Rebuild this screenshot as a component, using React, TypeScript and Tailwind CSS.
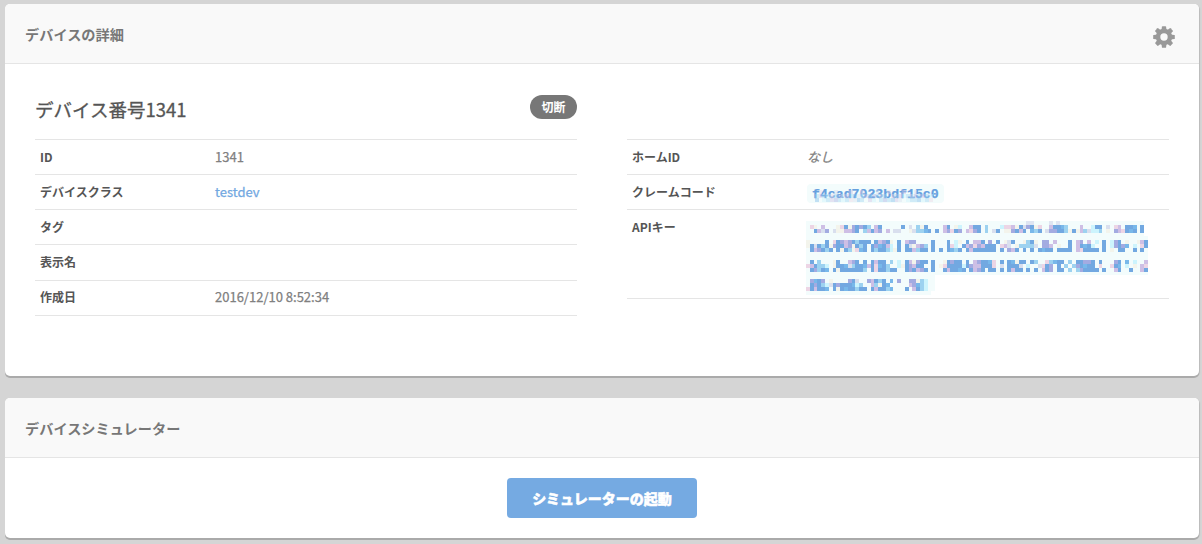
import type { ReactNode } from 'react';

const PALETTE: Record<string, string> = {
  B: '#72a8e1',
  S: '#78b8ea',
  L: '#9dd2f0',
  V: '#a3abe1',
  P: '#cebfe5',
  K: '#ecd5e5',
  G: '#d9dfee',
  C: '#cdf4fd',
  Y: '#f3f4ec',
};

const CELL = 3.8;

// Each line of the masked key: top offset and its cell rows
const API_KEY_LINES = [
  {
    top: 4,
    rows: [
      '.KY.P...YKBYVBVBL.PB.....B.G.LYB....PB.YC..PBB.L...CKKPYBGVBYK..PBBSL...P..CBB.G.KP.BBS.B.',
      '..BPGV.GYYPPVB.LPBPV.P.GG..YGLLSB.B.PVKBV.PKVB.L.GB.YYVBPB.SLB.GVVBBLYBYPLGCCL.Y.VPKBSB.B.',
    ],
  },
  {
    top: 19,
    rows: [
      'Y....B.KBVPVBLBBB.BPVBY.B.PVV....B...B.CY.B.PPB.V.B.YGB..YLBY.VV.P...B.PV.P.C.B.CVB.Y..YPB',
      'YBGBLBYVBBPVYBLB.BVSBPC.B.BGYPVL.B...BKC.BPVKVPBBB.KPG.YLLLLG.VVP.Y..B.PBSBC..B.CVBVS.C.KB',
      '.BPVBLB.BYBLYKSB.BLBBLCYB.BBPLBB.B.B.BSLB.BPBBBBBB.B.VPB.B.B.BSBB.BBBB.PKBBBB.B.Y.BB..B.B.',
    ],
  },
  {
    top: 39,
    rows: [
      '.B.L...YB..PVB.B.BPBB.L.C.BPYVBB.B..YBVBB.B.PVBBSK.B.BSYBB.BL..KLSBB.L.BBVVB.B...VB.S.C..P',
      'KPBLLC.YBBSGLBBSPBKSBL..CYBVPBB..B.YKBBBBCBVPPBBBK.G.BBBG.C..GKBV.B.L.LVBSBB.K..KBS.C.Y.PK',
      '.BVLBS.BYBBBBBBL.BKBBLBB..BVBPVB.B..BPBBSB.BPVB.BB.B.BPBB.B.B.PBV.BB.L.LVBBBB.B..PB..B..PB',
    ],
  },
  {
    top: 58,
    rows: [
      '.VSBV.Y....VBG..VPBLB.S.V..VVYLC',
      '.BVBLCGBVBBBSCL..PLYBS.....PVSLC',
      'KBPBBS.BYBSBBLBB.BPBBLS...B.PBLC',
    ],
  },
];

const CLAIM_ROWS = [
  '..K...G...P..K...G..K...P..G.....',
  '.LPLCKLVGPLSGCPLVLGL.KLPCLGVLPLC.',
  '.S.CLPVLCLKGSL.PC.LVLSPG.CLLSCLK.',
];

function Cells({ rows, top, left = 0 }: { rows: string[]; top: number; left?: number }) {
  return (
    <>
      {rows.map((row, y) =>
        row.split('').map((c, i) => {
          if (c === '.') return null;
          const x0 = Math.round(i * CELL);
          const x1 = Math.round((i + 1) * CELL);
          return (
            <rect key={`${y}-${i}`} x={left + x0} y={top + y * 4} width={x1 - x0} height={4} fill={PALETTE[c]} />
          );
        })
      )}
    </>
  );
}

function MaskedApiKey() {
  return (
    <svg width="342" height="74" className="block" shapeRendering="crispEdges">
      <path d="M0 0H338V15H342V54H129V70H125V74H0Z" fill="#f3fcfc" />
      <path d="M220 0h8v4h-8zM243 0h4v4h-4zM250 0h4v4h-4z" fill="#dfe5f2" />
      {API_KEY_LINES.map((line) => (
        <Cells key={line.top} rows={line.rows} top={line.top} />
      ))}
    </svg>
  );
}

function MaskedClaimCode() {
  return (
    <div className="relative h-[19px] w-[137px] rounded-sm bg-[#f3fcfc]">
      <span className="absolute top-[1px] left-[5px] font-['Liberation_Mono',monospace] text-[13.2px] leading-[20px] font-bold text-[#66a0df]">
        f4cad7023bdf15c0
      </span>
      <svg width="137" height="19" className="absolute inset-0 opacity-40" shapeRendering="crispEdges">
        <Cells rows={CLAIM_ROWS} top={6} left={4} />
      </svg>
    </div>
  );
}

function GearIcon() {
  return (
    <svg width="22" height="22" viewBox="-11 -11 22 22" fill="#999">
      <path
        fillRule="evenodd"
        d="M-8.2 0a8.2 8.2 0 1 0 16.4 0a8.2 8.2 0 1 0 -16.4 0ZM-3.7 0a3.7 3.7 0 1 1 7.4 0a3.7 3.7 0 1 1 -7.4 0Z"
      />
      {[0, 45, 90, 135, 180, 225, 270, 315].map((deg) => (
        <path key={deg} d="M-2.6 -6.5L-2.1 -10.3Q-2 -10.8 -1.5 -10.8H1.5Q2 -10.8 2.1 -10.3L2.6 -6.5Z" transform={`rotate(${deg})`} />
      ))}
    </svg>
  );
}

function Card({ title, action, className, children }: {
  title: string;
  action?: ReactNode;
  className: string;
  children: ReactNode;
}) {
  return (
    <section className={`rounded-[5px] bg-white shadow-[0_2px_0_#aaa,1px_1px_1px_#bbb] ${className}`}>
      <header className="flex h-[60px] items-center justify-between rounded-t-[5px] border-b border-[#e5e5e5] bg-[#f9f9f9] pr-6 pl-5">
        <h2 className="pt-[2px] text-[14.2px] font-bold text-[#777]">{title}</h2>
        {action}
      </header>
      {children}
    </section>
  );
}

function Row({ label, height = 'h-[35px]', leading = 'leading-[34px]', labelWidth, children }: {
  label: string;
  height?: string;
  leading?: string;
  labelWidth: string;
  children?: ReactNode;
}) {
  return (
    <div className={`flex border-b border-[#e5e5e5] pl-[5px] ${height} ${leading}`}>
      <dt className={`shrink-0 text-[12px] font-bold text-[#555] ${labelWidth}`}>{label}</dt>
      <dd className="text-[13px] text-[#808080] [-webkit-text-stroke:0.25px]">{children}</dd>
    </div>
  );
}

export default function App() {
  return (
    <div className="h-[544px] overflow-hidden bg-[#d5d5d5] pt-1 pr-[3px] pl-[5px] font-['Noto_Sans_CJK_JP',sans-serif]">
      <Card title="デバイスの詳細" className="h-[372px]" action={<div className="pt-[7px]"><GearIcon /></div>}>
        <div className="flex gap-[50px] px-[30px]">
          <div className="w-[542px]">
            <div className="flex h-[75px] items-start justify-between">
              <h1 className="pt-[32px] text-[18.5px] leading-[27px] text-[#555] [-webkit-text-stroke:0.3px]">デバイス番号1341</h1>
              <span className="mt-[31px] flex h-6 w-[47px] items-center justify-center rounded-full bg-[#777] text-[12px] font-bold text-white">
                切断
              </span>
            </div>
            <dl className="border-t border-[#e5e5e5]">
              <Row label="ID" labelWidth="w-[175px]">1341</Row>
              <Row label="デバイスクラス" labelWidth="w-[175px]">
                <a className="text-[#72a8e1]">testdev</a>
              </Row>
              <Row label="タグ" labelWidth="w-[175px]" />
              <Row label="表示名" labelWidth="w-[175px]" height="h-[36px]" />
              <Row label="作成日" labelWidth="w-[175px]" leading="leading-[32px]">2016/12/10 8:52:34</Row>
            </dl>
          </div>
          <div className="w-[542px] pt-[75px]">
            <dl className="border-t border-[#e5e5e5]">
              <Row label="ホームID" labelWidth="w-[175px]">
                <em>なし</em>
              </Row>
              <Row label="クレームコード" labelWidth="w-[175px]">
                <div className="pt-[9px]"><MaskedClaimCode /></div>
              </Row>
              <Row label="APIキー" labelWidth="w-[174px]" height="h-[89px]">
                <div className="pt-[11px]"><MaskedApiKey /></div>
              </Row>
            </dl>
          </div>
        </div>
      </Card>

      <Card title="デバイスシミュレーター" className="mt-[22px] h-[140px]">
        <div className="flex justify-center pt-5">
          <button className="h-10 w-[190px] rounded-[4px] bg-[#75aae2] text-[14px] font-black text-white [-webkit-text-stroke:0.5px]">
            シミュレーターの起動
          </button>
        </div>
      </Card>
    </div>
  );
}
